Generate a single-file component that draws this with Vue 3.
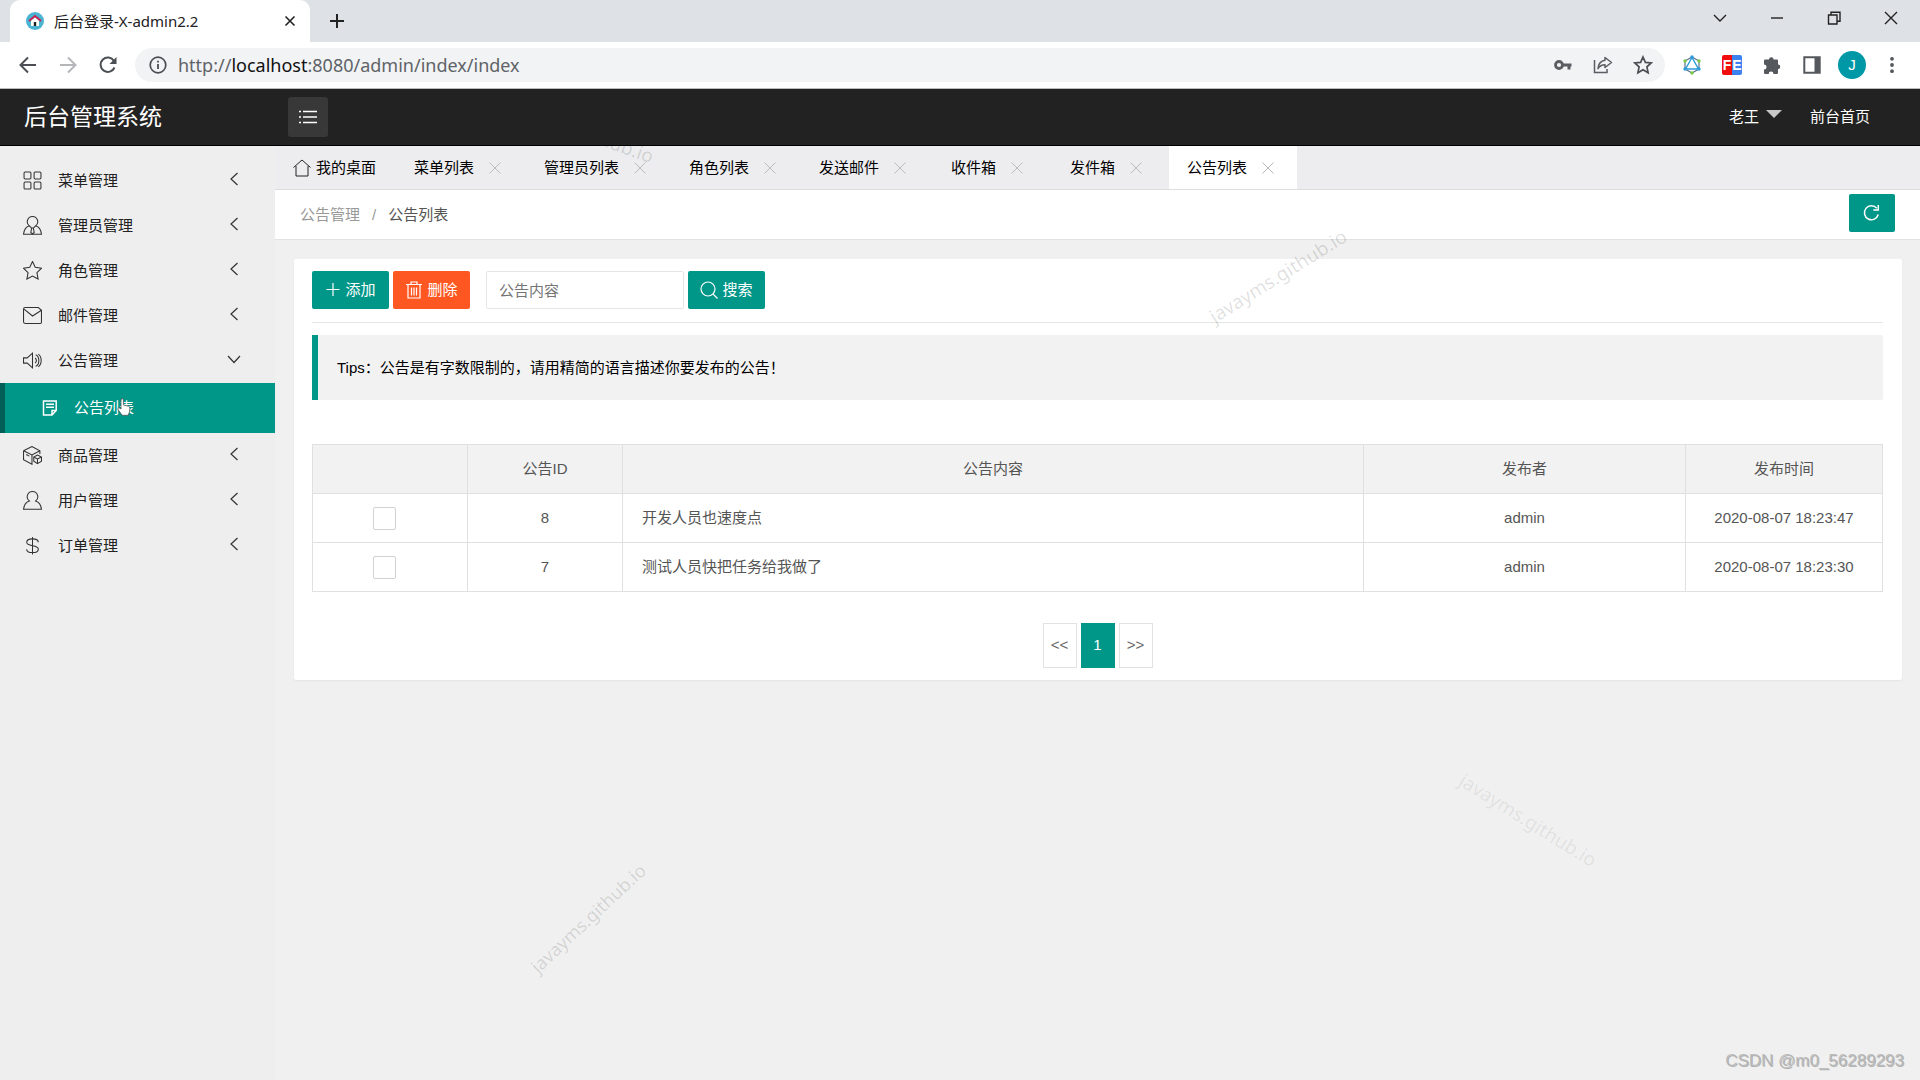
<script setup>
import { ref } from 'vue'

const menu = [
  { text: '菜单管理', icon: ['M2 1h4.500q1 0 1 1v4.500q0 1-1 1H2q-1 0-1-1V2q0-1 1-1z', 'M11.500 1H16q1 0 1 1v4.500q0 1-1 1h-4.500q-1 0-1-1V2q0-1 1-1z', 'M2 10.500h4.500q1 0 1 1V16q0 1-1 1H2q-1 0-1-1v-4.500q0-1 1-1z', 'M11.500 10.500H16q1 0 1 1V16q0 1-1 1h-4.500q-1 0-1-1v-4.500q0-1 1-1z'] },
  { text: '管理员管理', icon: ['M9 .5a4.900 4.900 0 0 1 3 8.800c2.900 1 5 3.700 5.500 7.900H.5C1 13 3.100 10.300 6 9.300A4.900 4.900 0 0 1 9 .5z', 'M6 9.400l2.200 2M12 9.400l-2.200 2M8.200 11.400h1.600l.8 4.200L9 17l-1.600-1.400z'] },
  { text: '角色管理', icon: ['M9 .5l2.600 5.500 6 .8-4.400 4.200 1.100 6.100L9 14.200l-5.300 2.900 1.100-6.100L.4 6.800l6-.8z'] },
  { text: '邮件管理', icon: ['M2 1.500h12.500l3 2.500v11.500q0 1-1 1h-14.500q-1.500 0-1.500-1.500V3Q.5 1.500 2 1.500z', 'M1 3l8 6.500L17.500 4'] },
  {
    text: '公告管理',
    open: true,
    icon: ['M.5 6.500h3.500l5-4.500v14l-5-4.500H.5z', 'M11.500 6.500a3.600 3.600 0 0 1 0 5M12 3.500c2 .8 3 3 3 5.500s-1 4.700-3 5.500M14.500 3c1.800 1.200 2.700 3.500 2.700 6s-.9 4.800-2.700 6'],
    child: { text: '公告列表' },
  },
  { text: '商品管理', icon: ['M.5 4.500L8.500 .5l7.500 4v3M.5 4.500l8 4 7.500-4M.5 4.500V13l8 4.300V8.500', 'M13.700 8.600l3.800 1.900v4l-3.800 2.200-3.500-2.200v-4zM10.200 10.500l3.500 1.800 3.800-1.800M13.700 12.300v4.200', 'M3 8l3 1.600'] },
  { text: '用户管理', icon: ['M9 .5a5 5 0 0 1 3 9c2.900 1 5 3.600 5.500 7.700H.5C1 13.100 3.100 10.500 6 9.500a5 5 0 0 1 3-9z'] },
  { text: '订单管理', icon: ['M14.500 6c0-2-2.200-3.300-5.500-3.300S3.500 4 3.500 6c0 2.200 2.200 2.700 5.500 3.200s5.500 1.200 5.500 3.300c0 2-2.200 3.200-5.500 3.200S3.500 14.500 3.500 12.500', 'M9 1v16.500'] },
]

const tabs = ['菜单列表', '管理员列表', '角色列表', '发送邮件', '收件箱', '发件箱', '公告列表']
const activeTab = ref('公告列表')

const notices = [
  { id: 8, content: '开发人员也速度点', author: 'admin', time: '2020-08-07 18:23:47' },
  { id: 7, content: '测试人员快把任务给我做了', author: 'admin', time: '2020-08-07 18:23:30' },
]
const keyword = ref('')
</script>

<template>
  <div class="screen">
    <!-- Browser tab strip -->
    <div class="strip">
      <div class="browser-tab">
        <svg class="favicon" viewBox="0 0 18 18">
          <circle cx="9" cy="9" r="9" fill="#4bb4d3" />
          <path d="M5 8.500l4-3.500 4 3.500V14H5z" fill="#fff" />
          <path d="M3 9l6-5 6 5" fill="none" stroke="#c9204f" stroke-width="1.800" />
          <path d="M7.800 10h2.400v4H7.800z" fill="#222" />
        </svg>
        <span class="browser-title">后台登录-X-admin2.2</span>
        <button class="bare" aria-label="关闭标签页">
          <svg width="12" height="12" viewBox="0 0 12 12"><path d="M1.500 1.500l9 9M10.500 1.500l-9 9" class="ink" stroke-width="1.600" /></svg>
        </button>
      </div>
      <button class="bare new-tab" aria-label="新标签页">
        <svg width="16" height="16" viewBox="0 0 16 16"><path d="M8 1v14M1 8h14" class="ink" stroke-width="2" /></svg>
      </button>
      <div class="window-buttons">
        <button class="bare" aria-label="搜索标签页"><svg width="14" height="14" viewBox="0 0 14 14"><path d="M1 4l6 6 6-6" class="ink" stroke-width="1.400" /></svg></button>
        <button class="bare" aria-label="最小化"><svg width="14" height="14" viewBox="0 0 14 14"><path d="M1 7h12" class="ink" stroke-width="1.400" /></svg></button>
        <button class="bare" aria-label="还原"><svg width="14" height="14" viewBox="0 0 14 14"><path d="M1.500 4h8.500v9H1.500zM4 4V1.200h9v9h-3" class="ink" stroke-width="1.400" /></svg></button>
        <button class="bare" aria-label="关闭"><svg width="14" height="14" viewBox="0 0 14 14"><path d="M1 1l12 12M13 1L1 13" class="ink" stroke-width="1.400" /></svg></button>
      </div>
    </div>

    <!-- Browser toolbar -->
    <div class="toolbar">
      <button class="bare tool" aria-label="后退"><svg width="18" height="18" viewBox="0 0 18 18"><path d="M17 9H2M9 1.500L1.500 9 9 16.500" fill="none" stroke="#4b4f53" stroke-width="2" /></svg></button>
      <button class="bare tool" aria-label="前进"><svg width="18" height="18" viewBox="0 0 18 18"><path d="M1 9h15M9 1.500L16.500 9 9 16.500" fill="none" stroke="#b4b6b9" stroke-width="2" /></svg></button>
      <button class="bare tool" aria-label="重新加载"><svg width="18" height="18" viewBox="0 0 18 18"><path d="M15.500 11.500A7.200 7.200 0 1 1 15 5" fill="none" stroke="#4b4f53" stroke-width="2" /><path d="M17.500 1v7h-7z" fill="#4b4f53" /></svg></button>
      <div class="omnibox">
        <svg class="info" viewBox="0 0 18 18"><circle cx="9" cy="9" r="7.800" fill="none" stroke="#4b4f53" stroke-width="1.700" /><path d="M9 8v5M9 4.800v1.800" stroke="#4b4f53" stroke-width="1.800" /></svg>
        <span class="url">http://<b>localhost</b>:8080/admin/index/index</span>
        <button class="bare tool" aria-label="密码"><svg width="18" height="18" viewBox="0 0 18 18"><circle cx="5" cy="9" r="3.500" fill="none" stroke="#5a5d61" stroke-width="2.800" /><path d="M9 9h8.500M15 9v4.500" fill="none" stroke="#5a5d61" stroke-width="3" /></svg></button>
        <button class="bare tool" aria-label="分享"><svg width="20" height="20" viewBox="0 0 20 20"><path d="M1.500 5v12.500h12.500V14" fill="none" stroke="#5a5d61" stroke-width="1.500" /><path d="M12 2.500l6.500 5-6.500 5V9.700c-3.500 0-5.500 1.300-7 4 .3-4.500 2.500-7.800 7-8.500z" fill="none" stroke="#5a5d61" stroke-width="1.500" stroke-linejoin="round" /></svg></button>
        <button class="bare tool" aria-label="收藏"><svg width="20" height="20" viewBox="0 0 20 20"><path d="M10 2l2.400 5.400 5.800.6-4.300 3.900 1.200 5.800-5.100-3-5.100 3 1.200-5.800L1.800 8l5.800-.6z" fill="none" stroke="#4b4f53" stroke-width="1.700" /></svg></button>
      </div>
      <button class="bare tool" aria-label="扩展 1"><svg width="20" height="20" viewBox="0 0 20 20"><path d="M10 2l7 4v8l-7 4-7-4V6z" fill="none" stroke="#55708a" stroke-width="1.200" /><path d="M10 2.500L3.500 14h13z" fill="none" stroke="#2b9bdc" stroke-width="1.400" /><g fill="#2b9bdc"><circle cx="10" cy="2" r="1.700" /><circle cx="3" cy="14" r="1.700" /><circle cx="17" cy="14" r="1.700" /></g><g fill="#7ac943"><circle cx="3" cy="6" r="1.700" /><circle cx="17" cy="6" r="1.700" /><circle cx="10" cy="18" r="1.700" /></g></svg></button>
      <button class="bare tool" aria-label="FeHelper"><span class="fe"><i class="fe-f">F</i><i class="fe-e">E</i></span></button>
      <button class="bare tool" aria-label="扩展程序"><svg width="20" height="20" viewBox="0 0 20 20"><path d="M3 4.500h4a2.300 2.300 0 1 1 4.600 0H15q1 0 1 1v4a2.300 2.300 0 1 1 0 4.600V18q0 1-1 1h-3.500a2.400 2.400 0 0 0-4.800 0H3q-1 0-1-1v-3.500a2.500 2.500 0 0 0 0-5v-4q0-1 1-1z" fill="#55585c" /></svg></button>
      <button class="bare tool" aria-label="侧边栏"><svg width="18" height="18" viewBox="0 0 18 18"><path d="M1.300 1.300h15.400v15.400H1.300z" fill="none" stroke="#55585c" stroke-width="2" /><path d="M11.500 1H17v16h-5.500z" fill="#55585c" /></svg></button>
      <button class="bare tool" aria-label="用户"><span class="avatar">J</span></button>
      <button class="bare tool" aria-label="更多"><svg width="18" height="18" viewBox="0 0 18 18"><g fill="#55585c"><circle cx="9" cy="2.800" r="1.900" /><circle cx="9" cy="9" r="1.900" /><circle cx="9" cy="15.200" r="1.900" /></g></svg></button>
    </div>

    <!-- Application header -->
    <header class="header">
      <a class="logo" href="#">后台管理系统</a>
      <button class="bare fold" aria-label="收起菜单">
        <svg width="18" height="14" viewBox="0 0 18 14"><path d="M4 1.500h14M4 7h14M4 12.500h14M0 1.500h2M0 7h2M0 12.500h2" stroke="#fff" stroke-width="1.500" /></svg>
      </button>
      <nav class="header-nav">
        <a href="#">老王<svg width="16" height="8" viewBox="0 0 16 8"><path d="M0 0h16L8 8z" fill="#c8c8c8" /></svg></a>
        <a href="#">前台首页</a>
      </nav>
    </header>

    <div class="body">
      <nav class="sidebar">
        <template v-for="item in menu" :key="item.text">
          <a class="menu-item" href="#">
            <svg class="menu-icon" viewBox="0 0 18 18"><path v-for="d in item.icon" :key="d" :d="d" /></svg>
            <span>{{ item.text }}</span>
            <svg class="menu-arrow" viewBox="0 0 14 14"><path :d="item.open ? 'M1 4l6 6.500L13 4' : 'M10.500 1L4 7l6.500 6'" /></svg>
          </a>
          <a v-if="item.child" class="menu-child" href="#">
            <svg width="16" height="16" viewBox="0 0 16 16"><path d="M1.500 1h12.700v9.500L10 15H1.500zM14.200 10.500H10V15M4 4.200h8M4 7.200h8" fill="none" stroke="#fff" stroke-width="1.500" /></svg>
            <span>{{ item.child.text }}</span>
            <svg class="pointer" viewBox="0 0 14 18"><path d="M4 9V2q0-1.300 1.200-1.300T6.400 2v5l5 1.200q1.600.4 1.500 2l-.5 4-1.200 3.100H5.200L1 11.500q-.5-1.300.7-1.500T4 11z" fill="#fff" stroke="#555" stroke-width=".8" /></svg>
          </a>
        </template>
      </nav>

      <main class="main">
        <div class="page-tabs">
          <a class="page-tab home" href="#">
            <svg width="18" height="18" viewBox="0 0 18 18"><path d="M.5 8.500L9 1l8.500 7.500M3 7v10h12V7" fill="none" stroke="#222" stroke-width="1" /></svg>
            <span>我的桌面</span>
          </a>
          <div v-for="tab in tabs" :key="tab" class="page-tab" :class="{ active: tab === activeTab }">
            <a href="#" @click.prevent="activeTab = tab">{{ tab }}</a>
            <button class="bare" :aria-label="'关闭' + tab"><svg width="12" height="12" viewBox="0 0 12 12"><path d="M.5.5l11 11M11.500.5l-11 11" stroke="#bbb" /></svg></button>
          </div>
        </div>

        <div class="crumbs">
          <a href="#">公告管理</a><span class="slash">/</span><span class="here">公告列表</span>
          <button class="btn refresh" aria-label="刷新">
            <svg width="18" height="18" viewBox="0 0 18 18"><path d="M15.200 10.500A7 7 0 1 1 13.800 4.200" fill="none" stroke="#fff" stroke-width="1.500" /><path d="M15.300 1v5h-5" fill="none" stroke="#fff" stroke-width="1.500" /></svg>
          </button>
        </div>

        <section class="card">
          <form class="actions" @submit.prevent>
            <button type="button" class="btn"><svg width="16" height="18" viewBox="0 0 16 18"><path d="M8 2v13M1.500 8.500h13" fill="none" stroke="#fff" stroke-width="1.200" /></svg>添加</button>
            <button type="button" class="btn danger"><svg width="18" height="18" viewBox="0 0 18 18"><path d="M1 3.500h16M6 3.500V1h6v2.500M3 4v13h12V4M6.500 6.500v8M9 6.500v8M11.500 6.500v8" fill="none" stroke="#fff" stroke-width="1.200" /></svg>删除</button>
            <input v-model="keyword" type="text" placeholder="公告内容" aria-label="公告内容" />
            <button class="btn"><svg width="18" height="18" viewBox="0 0 18 18"><circle cx="8" cy="8" r="7" fill="none" stroke="#fff" stroke-width="1.200" /><path d="M13 13l4.500 4.500" stroke="#fff" stroke-width="1.200" /></svg>搜索</button>
          </form>

          <blockquote class="tips">Tips：公告是有字数限制的，请用精简的语言描述你要发布的公告！</blockquote>

          <table class="notices">
            <colgroup><col class="c-check" /><col class="c-id" /><col class="c-content" /><col class="c-author" /><col class="c-time" /></colgroup>
            <thead>
              <tr><th></th><th>公告ID</th><th>公告内容</th><th>发布者</th><th>发布时间</th></tr>
            </thead>
            <tbody>
              <tr v-for="n in notices" :key="n.id">
                <td class="check"><input type="checkbox" :aria-label="'选择公告 ' + n.id" /></td>
                <td>{{ n.id }}</td>
                <td class="content">{{ n.content }}</td>
                <td>{{ n.author }}</td>
                <td>{{ n.time }}</td>
              </tr>
            </tbody>
          </table>

          <nav class="pager" aria-label="分页">
            <a href="#">&lt;&lt;</a><a href="#" class="current">1</a><a href="#">&gt;&gt;</a>
          </nav>
        </section>
      </main>
    </div>

    <span class="mark mark-a">javayms.github.io</span>
    <span class="mark mark-b">javayms.github.io</span>
    <span class="mark mark-c">javayms.github.io</span>
    <span class="mark mark-d">javayms.github.io</span>
    <span class="credit">CSDN @m0_56289293</span>
  </div>
</template>

<style>
body {
  background: #f0f0f0;
}
</style>

<style scoped>
.screen {
  position: relative;
  display: flex;
  flex-direction: column;
  min-height: 100vh;
  overflow: hidden;
  font-family: "Liberation Sans", "Noto Sans CJK SC", sans-serif;
  font-size: 15px;
  line-height: 24px;
  color: #222;
}
.screen *,
.screen {
  box-sizing: border-box;
}
a {
  color: inherit;
  text-decoration: none;
}
svg {
  flex: none;
  display: block;
}
.bare {
  display: flex;
  align-items: center;
  justify-content: center;
  padding: 0;
  border: 0;
  background: none;
  font: inherit;
  cursor: pointer;
}
.ink {
  fill: none;
  stroke: #222;
}

.strip {
  display: flex;
  height: 42px;
  background: #dee1e6;
  font-family: "Noto Sans", "Noto Sans CJK SC", sans-serif;
}
.browser-tab {
  display: flex;
  align-items: center;
  width: 300px;
  margin-left: 10px;
  padding: 0 14px 0 16px;
  border-radius: 10px 10px 0 0;
  background: #fff;
}
.favicon {
  width: 18px;
  height: 18px;
}
.browser-title {
  flex: 1;
  margin-left: 10px;
  white-space: nowrap;
}
.new-tab {
  margin-left: 19px;
}
.window-buttons {
  display: flex;
  margin-left: auto;
  padding-right: 1px;
}
.window-buttons .bare {
  width: 57px;
  height: 36px;
}

.toolbar {
  display: flex;
  align-items: center;
  height: 47px;
  padding: 0 8px;
  background: #fff;
  border-bottom: 1px solid #bbb;
}
.tool {
  width: 40px;
  height: 34px;
}
.omnibox {
  display: flex;
  flex: 1;
  align-items: center;
  height: 34px;
  margin: 0 7px;
  padding: 0 2px 0 14px;
  border-radius: 17px;
  background: #f1f3f4;
}
.info {
  width: 18px;
  height: 18px;
}
.url {
  flex: 1;
  margin-left: 11px;
  font-family: "Noto Sans", sans-serif;
  font-size: 18px;
  color: #5f6368;
}
.url b {
  font-weight: 400;
  color: #111;
}
.fe {
  display: flex;
  width: 20px;
  height: 20px;
  overflow: hidden;
  border-radius: 2px;
  color: #fff;
  font: bold 14px/20px "Liberation Sans", sans-serif;
}
.fe i {
  flex: 1;
  font-style: normal;
}
.fe-f {
  background: #f20d0d;
}
.fe-e {
  background: #3b82f0;
}
.avatar {
  width: 28px;
  height: 28px;
  border-radius: 50%;
  background: #0097a7;
  color: #fff;
  line-height: 28px;
}

.header {
  position: relative;
  z-index: 2;
  display: flex;
  align-items: center;
  height: 57px;
  padding: 0 50px 0 24px;
  background: #222;
  border-bottom: 1px solid #000;
  color: #fff;
}
.logo {
  width: 264px;
  font-size: 23px;
}
.fold {
  width: 40px;
  height: 40px;
  border-radius: 3px;
  background: #383838;
}
.header-nav {
  display: flex;
  gap: 28px;
  margin-left: auto;
}
.header-nav a {
  display: flex;
  gap: 7px;
}
.header-nav svg {
  margin-top: 5px;
}

.body {
  display: flex;
  flex: 1;
}
.sidebar {
  width: 275px;
  flex: none;
  padding-top: 12px;
  background: #eee;
}
.menu-item {
  display: flex;
  align-items: center;
  height: 45px;
  padding: 0 34px 0 23px;
}
.menu-icon {
  width: 19px;
  height: 19px;
  margin-right: 16px;
  fill: none;
  stroke: #333;
}
.menu-arrow {
  width: 14px;
  height: 14px;
  margin: 0 0 4px auto;
  fill: none;
  stroke: #333;
  stroke-width: 1.2;
}
.menu-child {
  position: relative;
  display: flex;
  align-items: center;
  height: 50px;
  gap: 16px;
  padding-left: 37px;
  border-left: 5px solid #005f56;
  background: #009688;
  color: #fff;
}
.pointer {
  position: absolute;
  left: 112px;
  top: 15px;
  width: 14px;
  height: 18px;
}

.main {
  flex: 1;
  min-width: 0;
}
.page-tabs {
  display: flex;
  gap: 2px;
  height: 44px;
  background: #ededef;
  border-bottom: 1px solid #ddd;
  color: #000;
}
.page-tab {
  display: flex;
  align-items: center;
  justify-content: center;
  gap: 15px;
  min-width: 117px;
  padding: 0 23px 0 18px;
}
.page-tab.home {
  gap: 5px;
  padding: 0 18px;
}
.page-tab.active {
  background: #fff;
}
.crumbs {
  display: flex;
  align-items: center;
  height: 50px;
  padding: 0 25px;
  background: #fff;
  border-bottom: 1px solid #e2e2e2;
  color: #999;
}
.slash {
  margin: 0 12px;
}
.here {
  color: #555;
}
.btn {
  display: flex;
  align-items: center;
  justify-content: center;
  gap: 4px;
  width: 77px;
  height: 38px;
  padding: 0;
  border: 0;
  border-radius: 2px;
  background: #009688;
  color: #fff;
  font: inherit;
  cursor: pointer;
}
.btn.danger {
  background: #ff5722;
}
.btn.refresh {
  width: 46px;
  margin: 0 0 3px auto;
}

.card {
  margin: 19px 18px 19px 19px;
  padding: 0 19px 12px 18px;
  border-radius: 2px;
  background: #fff;
  box-shadow: 0 1px 2px rgba(0, 0, 0, 0.05);
}
.actions {
  display: flex;
  gap: 4px;
  padding: 12px 0 13px;
  border-bottom: 1px solid #e6e6e6;
}
.actions input {
  width: 198px;
  height: 38px;
  margin-left: 12px;
  padding: 0 12px;
  border: 1px solid #e6e6e6;
  border-radius: 2px;
  font: inherit;
}
.actions input::placeholder {
  color: #757575;
}
.tips {
  margin: 12px 0 44px;
  padding: 21px 19px 20px;
  border-left: 6px solid #009688;
  border-radius: 0 2px 2px 0;
  background: #f2f2f2;
  color: #000;
}
.notices {
  width: 100%;
  table-layout: fixed;
  border-collapse: collapse;
  color: #555;
}
.c-check,
.c-id {
  width: 155px;
}
.c-author {
  width: 322px;
}
.c-time {
  width: 197px;
}
.notices th,
.notices td {
  height: 49px;
  padding: 0 19px;
  border: 1px solid #e0e0e0;
  font-weight: 400;
  text-align: center;
}
.notices th {
  background: #f2f2f2;
}
.notices .content {
  text-align: left;
}
.notices .check {
  padding-right: 31px;
}
.check input {
  display: block;
  appearance: none;
  width: 23px;
  height: 23px;
  margin: 0 auto;
  border: 1px solid #d2d2d2;
  border-radius: 2px;
  background: #fff;
}
.pager {
  display: flex;
  justify-content: center;
  gap: 4px;
  margin-top: 31px;
}
.pager a {
  width: 34px;
  height: 45px;
  border: 1px solid #e2e2e2;
  line-height: 42px;
  text-align: center;
  color: #666;
}
.pager .current {
  border-color: #009688;
  background: #009688;
  color: #fff;
}

/* Watermarks lie freely over the page */
.mark {
  position: absolute;
  width: 160px;
  font-family: "Noto Sans", sans-serif;
  font-size: 19px;
  text-align: center;
  color: rgba(0, 0, 0, 0.13);
  pointer-events: none;
}
.mark-a {
  left: 499px;
  top: 118px;
  transform: rotate(20deg);
}
.mark-b {
  left: 1198px;
  top: 264px;
  transform: rotate(-32deg);
}
.mark-c {
  left: 508px;
  top: 906px;
  font-size: 18px;
  transform: rotate(-43deg);
}
.mark-d {
  left: 1448px;
  top: 808px;
  transform: rotate(32deg);
  color: rgba(0, 0, 0, 0.08);
}
.credit {
  position: absolute;
  right: 15px;
  bottom: 6px;
  font-size: 17px;
  color: #b4b4b4;
  text-shadow: -1px -1px 0 rgba(110, 110, 110, 0.4);
}
</style>
